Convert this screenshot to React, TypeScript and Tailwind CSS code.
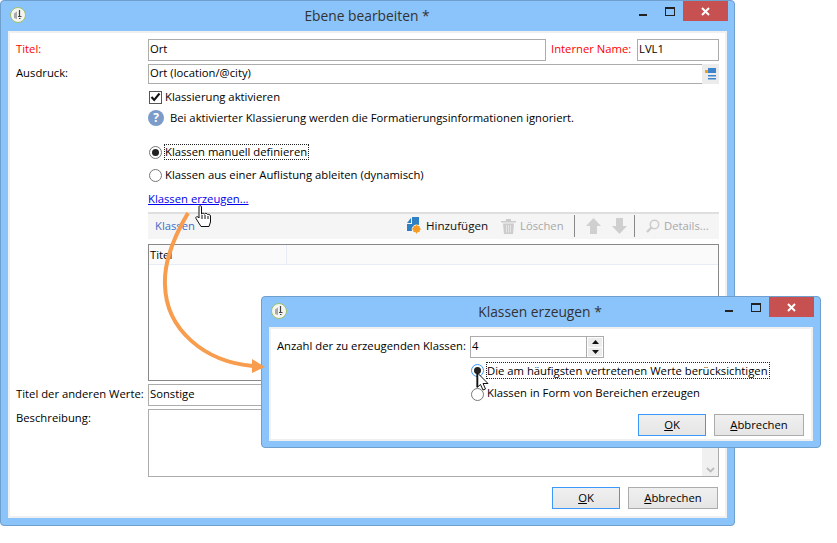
import type { ReactNode } from "react"

function AppIcon() {
  return (
    <svg width="16" height="16" viewBox="0 0 16 16">
      <circle cx="8" cy="8" r="7.5" fill="#f4f4f0" stroke="#9cc06a" />
      <path d="M4 6.5 L7 4.5 V12 L4 11 Z" fill="#a9a9a9" />
      <path d="M9.5 3 V9 M8 9.5 H11.5 M9 11.5 H10.5" stroke="#444" strokeWidth="1.2" fill="none" />
    </svg>
  )
}

function TitleBar({ title, center }: { title: string; center: number }) {
  return (
    <div className="relative h-[30px] shrink-0">
      <div className="absolute left-[2px] top-[6px]">
        <AppIcon />
      </div>
      <div
        className="absolute top-[4px] -translate-x-1/2 whitespace-nowrap text-[13.8px] leading-[22px] text-[#333]"
        style={{ left: center }}
      >
        {title}
      </div>
      <div className="absolute right-[-1px] top-0 flex items-start">
        <div className="mt-[13px] h-[2px] w-[8px] bg-[#222]" />
        <div className="ml-[18px] mt-[6px] h-[9px] w-[10px] border border-t-2 border-[#222]" />
        <div className="ml-[8px] flex h-[20px] w-[45px] items-center justify-center bg-[#c75050]">
          <svg width="9" height="9" viewBox="0 0 9 9">
            <path d="M1 1 L8 8 M8 1 L1 8" stroke="#fff" strokeWidth="2" />
          </svg>
        </div>
      </div>
    </div>
  )
}

function Radio({ checked, focus }: { checked?: boolean; focus?: boolean }) {
  return (
    <span
      className={`flex h-[13px] w-[13px] shrink-0 items-center justify-center rounded-full border bg-white ${
        focus ? "border-[#3c98fa]" : "border-[#777]"
      }`}
    >
      {checked && <span className="h-[7px] w-[7px] rounded-full bg-[#222]" />}
    </span>
  )
}

function Button({ children, primary }: { children: ReactNode; primary?: boolean }) {
  return (
    <div
      className={`flex h-[22px] items-center justify-center border bg-gradient-to-b from-[#f0f0f0] to-[#e5e5e5] ${
        primary ? "w-[68px] border-[#3c98fa]" : "w-[90px] border-[#acacac]"
      }`}
    >
      {children}
    </div>
  )
}

function DialogButtons() {
  return (
    <>
      <Button primary>
        <span>
          <span className="underline">O</span>K
        </span>
      </Button>
      <Button>
        <span>
          <span className="underline">A</span>bbrechen
        </span>
      </Button>
    </>
  )
}

function AddIcon() {
  return (
    <svg width="15" height="17" viewBox="0 0 15 17">
      <path d="M1 6 L5 1 V6 Z" fill="#2f7fc4" />
      <path d="M6 0 H13 V8 A5 5 0 0 0 6 14 H1 V7 H6 Z" fill="#2f7fc4" />
      <circle cx="10.5" cy="12" r="3.5" fill="#f59a23" />
      <path d="M10.5 7.5 V16.5 M6 12 H15 M7.5 9 L13.5 15 M13.5 9 L7.5 15" stroke="#f59a23" strokeWidth="1" />
    </svg>
  )
}

function TrashIcon() {
  return (
    <svg width="15" height="16" viewBox="0 0 15 16">
      <path d="M0 3 H15 V4.5 H0 Z M5 1 H10 V3 H5 Z" fill="#ccc" />
      <path d="M2 5.5 H13 L12 16 H3 Z" fill="#ccc" />
      <path d="M5.5 7 V14.5 M7.5 7 V14.5 M9.5 7 V14.5" stroke="#e4e4e4" />
    </svg>
  )
}

function ArrowIcon({ down }: { down?: boolean }) {
  return (
    <svg width="15" height="16" viewBox="0 0 15 16">
      <path d={down ? "M4 0 H11 V8 H15 L7.5 16 L0 8 H4 Z" : "M4 16 H11 V8 H15 L7.5 0 L0 8 H4 Z"} fill="#cfcfcf" />
    </svg>
  )
}

function Toolbar() {
  return (
    <div className="mt-[5px] flex h-[27px] items-center border-t-2 border-[#dfdfdf] bg-[#f5f5f5] pb-[2px] pl-[7px] pr-[11px]">
      <span className="text-[#3c6fc9]">Klassen</span>
      <div className="ml-auto flex items-center">
        <AddIcon />
        <span className="ml-[5px] w-[62px] whitespace-nowrap text-[11.6px] text-[#111]">Hinzufügen</span>
        <span className="ml-[13px]">
          <TrashIcon />
        </span>
        <span className="ml-[4px] w-[44px] text-[#a8a8a8]">Löschen</span>
        <span className="ml-[10px] h-[22px] w-px bg-[#888]" />
        <span className="ml-[11px]">
          <ArrowIcon />
        </span>
        <span className="ml-[11px]">
          <ArrowIcon down />
        </span>
        <span className="ml-[7px] h-[22px] w-px bg-[#888]" />
        <span className="ml-[11px]">
          <svg width="14" height="14" viewBox="0 0 14 14">
            <circle cx="8.5" cy="5.5" r="4.2" fill="none" stroke="#ccc" strokeWidth="1.6" />
            <path d="M5.5 8.5 L1 13" stroke="#ccc" strokeWidth="2.4" />
          </svg>
        </span>
        <span className="ml-[4px] w-[44px] whitespace-nowrap text-[#a8a8a8]">Details...</span>
      </div>
    </div>
  )
}

function MainWindow() {
  return (
    <div className="flex h-[526px] w-[735px] flex-col rounded-[4px] border border-[#6f9fcc] bg-[#8ac4fb] px-[7px]">
      <TitleBar title="Ebene bearbeiten *" center={359} />
      <div className="h-[487px] border-2 border-[#f0f0f0] bg-white px-[6px] pt-[6px]">
        <div className="flex h-[22px] items-center">
          <div className="w-[132px] pb-[2px] text-[#ff0000]">Titel:</div>
          <div className="flex h-full w-[398px] items-center border border-[#acacac] px-[1px] pb-[2px]">Ort</div>
          <div className="ml-[5px] w-[86px] whitespace-nowrap pb-[2px] text-[#ff0000]">Interner Name:</div>
          <div className="flex h-full w-[82px] items-center border border-[#acacac] px-[1px] pb-[2px]">LVL1</div>
        </div>
        <div className="mt-[3px] flex h-[20px] items-center">
          <div className="w-[132px] pb-[2px]">Ausdruck:</div>
          <div className="flex h-full w-[554px] items-center border border-r-0 border-[#acacac] px-[1px] pb-[2px]">
            Ort (location/@city)
          </div>
          <div className="flex h-full w-[17px] items-center justify-center bg-[#ececec]">
            <svg width="11" height="12" viewBox="0 0 11 12">
              <rect x="0" y="2" width="4" height="3" fill="#f0a020" />
              <rect x="3" y="0" width="8" height="5" fill="#3a85cc" />
              <rect x="3" y="7" width="8" height="1.5" fill="#3a85cc" />
              <rect x="3" y="10" width="8" height="1.5" fill="#3a85cc" />
            </svg>
          </div>
        </div>
        <div className="ml-[133px] mt-[6px] flex h-[14px] items-center gap-[3px]">
          <span className="flex h-[13px] w-[13px] items-center justify-center border border-[#555] bg-white">
            <svg width="11" height="10" viewBox="0 0 11 10">
              <path d="M1.5 5 L4.2 8 L9.5 1.5" fill="none" stroke="#111" strokeWidth="2" />
            </svg>
          </span>
          <span>Klassierung aktivieren</span>
        </div>
        <div className="ml-[132px] mt-[6px] flex h-[16px] items-center gap-[6px]">
          <span className="flex h-[16px] w-[16px] items-center justify-center rounded-full bg-[#7b9cc9] text-[12px] font-bold text-white">
            ?
          </span>
          <span>Bei aktivierter Klassierung werden die Formatierungsinformationen ignoriert.</span>
        </div>
        <div className="ml-[133px] mt-[18px] flex h-[16px] items-center gap-[2px]">
          <Radio checked />
          <span className="border border-dotted border-[#222] pr-px leading-[14px]">Klassen manuell definieren</span>
        </div>
        <div className="ml-[133px] mt-[7px] flex h-[16px] items-center gap-[3px]">
          <Radio />
          <span>Klassen aus einer Auflistung ableiten (dynamisch)</span>
        </div>
        <div className="ml-[132px] mt-[8px] h-[16px] leading-[16px] text-[#0000ee] underline">Klassen erzeugen...</div>
        <div className="ml-[132px]">
          <Toolbar />
          <div className="mt-[5px] h-[137px] border border-[#888]">
            <div className="flex h-[20px] items-center border-b border-[#e6edf7] bg-[#fafafa]">
              <div className="h-full w-[138px] border-r border-[#e6edf7] pl-[1px] leading-[20px]">Titel</div>
            </div>
          </div>
        </div>
        <div className="mt-[3px] flex h-[22px] items-center">
          <div className="w-[132px] whitespace-nowrap pb-[2px]">Titel der anderen Werte:</div>
          <div className="flex h-full w-[571px] items-center border border-[#acacac] px-[1px] pb-[2px]">Sonstige</div>
        </div>
        <div className="mt-[3px] flex h-[68px]">
          <div className="w-[132px] pt-[1px]">Beschreibung:</div>
          <div className="flex h-full w-[571px] justify-end border border-[#acacac]">
            <div className="flex w-[16px] items-end justify-center bg-[#f0f0f0] pb-[3px]">
              <svg width="9" height="6" viewBox="0 0 9 6">
                <path d="M1 1 L4.5 4.5 L8 1" fill="none" stroke="#bbb" strokeWidth="1.8" />
              </svg>
            </div>
          </div>
        </div>
        <div className="mr-px mt-[10px] flex justify-end gap-[8px]">
          <DialogButtons />
        </div>
      </div>
    </div>
  )
}

function SubDialog() {
  return (
    <div className="absolute left-[261px] top-[296px] flex h-[152px] w-[560px] flex-col rounded-[4px] border border-[#6f9fcc] bg-[#8ac4fb] px-[7px]">
      <TitleBar title="Klassen erzeugen *" center={271} />
      <div className="h-[114px] border-2 border-[#f0f0f0] bg-white pl-[6px] pr-[7px] pt-[7px]">
        <div className="flex h-[22px] items-center">
          <div className="w-[193px] whitespace-nowrap pb-[2px]">Anzahl der zu erzeugenden Klassen:</div>
          <div className="flex h-full w-[134px] items-center justify-between border border-[#acacac] pl-[1px]">
            <span className="pb-[2px]">4</span>
            <div className="flex h-full w-[17px] flex-col gap-px border-l border-[#acacac] bg-white p-px">
              <div className="flex flex-1 items-center justify-center bg-[#ececec]">
                <svg width="7" height="4" viewBox="0 0 7 4">
                  <path d="M3.5 0 L7 4 H0 Z" fill="#111" />
                </svg>
              </div>
              <div className="flex flex-1 items-center justify-center bg-[#ececec]">
                <svg width="7" height="4" viewBox="0 0 7 4">
                  <path d="M0 0 H7 L3.5 4 Z" fill="#111" />
                </svg>
              </div>
            </div>
          </div>
        </div>
        <div className="ml-[194px] mt-[4px] flex h-[17px] items-center gap-[2px]">
          <Radio checked focus />
          <span className="border border-dotted border-[#222] pr-px leading-[15px]">
            Die am häufigsten vertretenen Werte berücksichtigen
          </span>
        </div>
        <div className="ml-[194px] mt-[7px] flex h-[16px] items-center gap-[3px]">
          <Radio />
          <span className="pb-[2px]">Klassen in Form von Bereichen erzeugen</span>
        </div>
        <div className="mt-[12px] flex justify-end gap-[8px]">
          <DialogButtons />
        </div>
      </div>
    </div>
  )
}

export default function App() {
  return (
    <div className="relative h-[543px] w-[837px] overflow-hidden bg-white font-['Open_Sans',sans-serif] text-[11.28px] leading-[16px] text-black">
      <MainWindow />
      <SubDialog />

      {/* orange arrow from the link to the dialog */}
      <svg className="absolute left-0 top-0" width="837" height="543" viewBox="0 0 837 543">
        <path
          d="M188 213 C172 240 164 265 165 285 C166 330 205 362 253 366"
          fill="none"
          stroke="#f89c4e"
          strokeWidth="4"
        />
        <path d="M252 359 L265 367 L252 373 Z" fill="#f89c4e" />
      </svg>

      {/* hand cursor */}
      <svg className="absolute left-[195px] top-[205px]" width="18" height="23" viewBox="0 0 18 23">
        <path
          d="M4 1.5 C4 0.5 6.5 0.5 6.5 1.5 V9 C7 8 9 8 9.5 9 C10 8 12 8 12.5 9.5 C13 9 15.5 9.5 15.5 11 V17 L14 21.5 H6 L1 13.5 C0 12 2.5 10.5 4 13 Z"
          fill="#fff"
          stroke="#111"
        />
        <path d="M7 10 V14 M10 10 V14 M13 11 V14" stroke="#111" />
      </svg>

      {/* arrow cursor */}
      <svg className="absolute left-[476px] top-[372px]" width="14" height="19" viewBox="0 0 14 19">
        <path d="M1 0.5 V15.5 L4.5 12.5 L7 18 L9.5 17 L7 11.5 H12 Z" fill="#fff" stroke="#111" />
        <path d="M1.5 1 V15" stroke="#111" strokeWidth="1.5" />
      </svg>
    </div>
  )
}
